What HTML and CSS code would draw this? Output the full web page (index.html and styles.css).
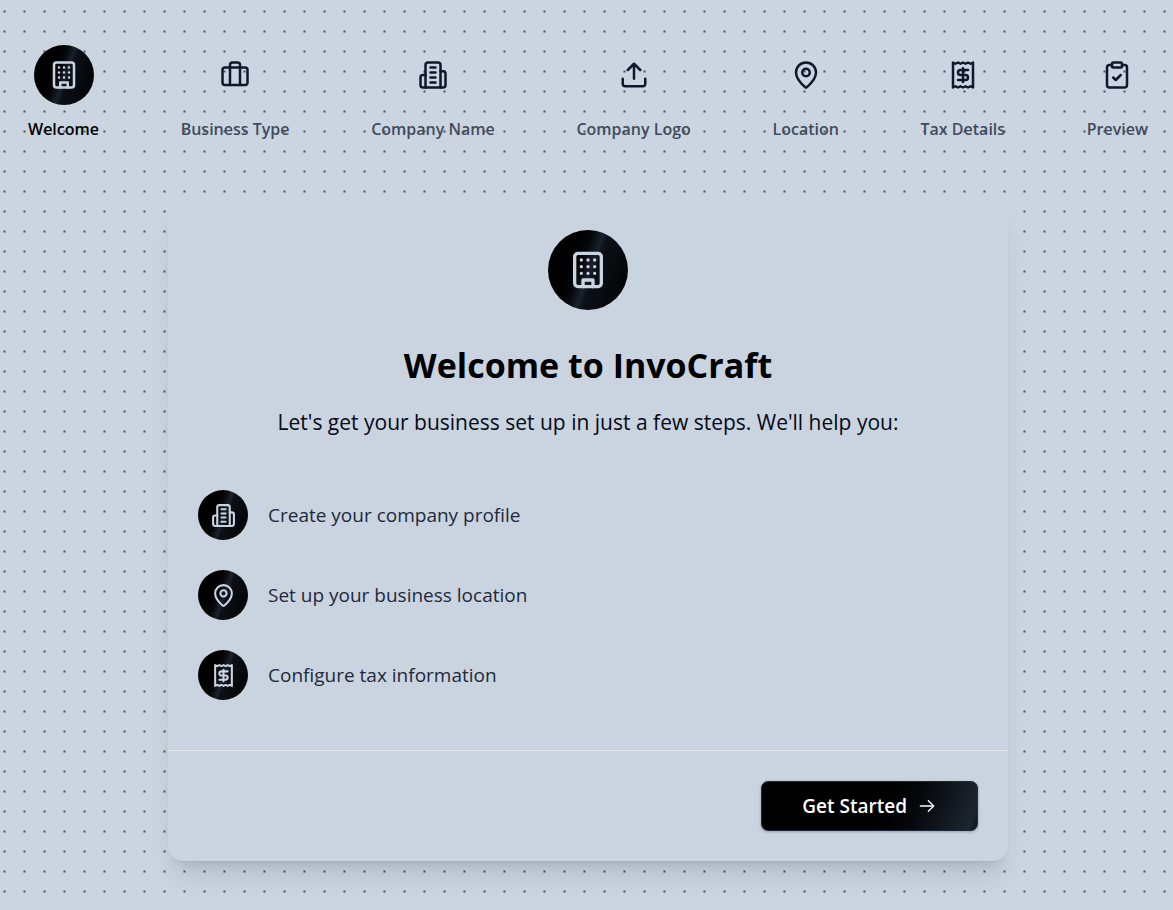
FILE: index.html
```html
<!DOCTYPE html>
<html lang="en">
<head>
<meta charset="utf-8">
<meta name="viewport" content="width=device-width, initial-scale=1">
<title>InvoCraft</title>
<link rel="stylesheet" href="styles.css">
</head>
<body>
<svg class="sprite" aria-hidden="true">
  <symbol id="building" viewBox="0 0 24 24"><rect width="16" height="20" x="4" y="2" rx="2"/><path d="M9 22v-4h6v4M8 6h.01M16 6h.01M12 6h.01M12 10h.01M12 14h.01M16 10h.01M16 14h.01M8 10h.01M8 14h.01"/></symbol>
  <symbol id="briefcase" viewBox="0 0 24 24"><path d="M16 20V4a2 2 0 0 0-2-2h-4a2 2 0 0 0-2 2v16"/><rect width="20" height="14" x="2" y="6" rx="2"/></symbol>
  <symbol id="offices" viewBox="0 0 24 24"><path d="M6 22V4a2 2 0 0 1 2-2h8a2 2 0 0 1 2 2v18Z"/><path d="M6 12H4a2 2 0 0 0-2 2v6a2 2 0 0 0 2 2h2M18 9h2a2 2 0 0 1 2 2v9a2 2 0 0 1-2 2h-2M10 6h4M10 10h4M10 14h4M10 18h4"/></symbol>
  <symbol id="upload" viewBox="0 0 24 24"><path d="M21 15v4a2 2 0 0 1-2 2H5a2 2 0 0 1-2-2v-4M17 8l-5-5-5 5M12 3v12"/></symbol>
  <symbol id="pin" viewBox="0 0 24 24"><path d="M20 10c0 4.993-5.539 10.193-7.399 11.799a1 1 0 0 1-1.202 0C9.539 20.193 4 14.993 4 10a8 8 0 0 1 16 0"/><circle cx="12" cy="10" r="3"/></symbol>
  <symbol id="receipt" viewBox="0 0 24 24"><path d="M4 2v20l2-1 2 1 2-1 2 1 2-1 2 1 2-1 2 1V2l-2 1-2-1-2 1-2-1-2 1-2-1-2 1Z"/><path d="M16 8h-6a2 2 0 1 0 0 4h4a2 2 0 1 1 0 4H8M12 17.5v-11"/></symbol>
  <symbol id="clipboard" viewBox="0 0 24 24"><rect width="8" height="4" x="8" y="2" rx="1"/><path d="M16 4h2a2 2 0 0 1 2 2v14a2 2 0 0 1-2 2H6a2 2 0 0 1-2-2V6a2 2 0 0 1 2-2h2M9 14l2 2 4-4"/></symbol>
</svg>
<div class="page">
  <nav aria-label="Setup steps">
    <ol class="steps">
      <li class="step active" aria-current="step"><span class="badge step-badge"><svg class="icon"><use href="#building"/></svg></span><span>Welcome</span></li>
      <li class="step"><span class="step-badge"><svg class="icon"><use href="#briefcase"/></svg></span><span>Business Type</span></li>
      <li class="step"><span class="step-badge"><svg class="icon"><use href="#offices"/></svg></span><span>Company Name</span></li>
      <li class="step"><span class="step-badge"><svg class="icon"><use href="#upload"/></svg></span><span>Company Logo</span></li>
      <li class="step"><span class="step-badge"><svg class="icon"><use href="#pin"/></svg></span><span>Location</span></li>
      <li class="step"><span class="step-badge"><svg class="icon"><use href="#receipt"/></svg></span><span>Tax Details</span></li>
      <li class="step"><span class="step-badge"><svg class="icon"><use href="#clipboard"/></svg></span><span>Preview</span></li>
    </ol>
  </nav>
  <main class="card">
    <div class="card-body">
      <span class="badge hero-badge"><svg class="icon icon-lg"><use href="#building"/></svg></span>
      <h1 class="title">Welcome to InvoCraft</h1>
      <p class="lead">Let's get your business set up in just a few steps. We'll help you:</p>
      <ul class="features">
        <li class="feature"><span class="badge feature-badge"><svg class="icon icon-sm"><use href="#offices"/></svg></span><span>Create your company profile</span></li>
        <li class="feature"><span class="badge feature-badge"><svg class="icon icon-sm"><use href="#pin"/></svg></span><span>Set up your business location</span></li>
        <li class="feature"><span class="badge feature-badge"><svg class="icon icon-sm"><use href="#receipt"/></svg></span><span>Configure tax information</span></li>
      </ul>
    </div>
    <footer class="card-footer">
      <button class="start" type="button"><span>Get Started</span><svg class="arrow" viewBox="0 0 15 15" aria-hidden="true"><path d="M8.14645 3.14645C8.34171 2.95118 8.65829 2.95118 8.85355 3.14645L12.8536 7.14645C13.0488 7.34171 13.0488 7.65829 12.8536 7.85355L8.85355 11.8536C8.65829 12.0488 8.34171 12.0488 8.14645 11.8536C7.95118 11.6583 7.95118 11.3417 8.14645 11.1464L11.2929 8H2.5C2.22386 8 2 7.77614 2 7.5C2 7.22386 2.22386 7 2.5 7H11.2929L8.14645 3.85355C7.95118 3.65829 7.95118 3.34171 8.14645 3.14645Z"/></svg></button>
    </footer>
  </main>
</div>
</body>
</html>
```
FILE: styles.css
```css
* { box-sizing: border-box; }

body {
  margin: 0;
  min-height: 100vh;
  font-family: "Open Sans", "Noto Sans", sans-serif;
  color: #020617;
  background-color: #cbd5e1;
  background-image: radial-gradient(circle at 22.5% 57.5%, #4b5563 0, #4b556300 2px);
  background-size: 20px 20px;
}

.sprite { display: none; }

.page { padding: 45px 25px 49px 28px; }

.steps,
.features {
  list-style: none;
  margin: 0;
  padding: 0;
}

.steps {
  display: flex;
  justify-content: space-between;
}

.step {
  display: flex;
  flex-direction: column;
  align-items: center;
  gap: 12px;
  font-size: 16px;
  line-height: 24px;
  font-weight: 600;
  color: #414b5c;
  white-space: nowrap;
}

.step.active { color: #000; }

.step-badge {
  display: grid;
  place-items: center;
  width: 60px;
  height: 60px;
  color: #0f172a;
}

.badge {
  display: grid;
  place-items: center;
  flex: none;
  border-radius: 50%;
  color: #cbd5e1;
  background: linear-gradient(110deg, #000 0%, #000 30%, #05070a 42%, #1a222d 52%, #0c1017 57%, #000 100%);
}

.icon {
  width: 30px;
  height: 30px;
  fill: none;
  stroke: currentColor;
  stroke-width: 2;
  stroke-linecap: round;
  stroke-linejoin: round;
}

.icon-lg { width: 40px; height: 40px; }
.icon-sm { width: 25px; height: 25px; }

.card {
  max-width: 840px;
  margin: 59px auto 0;
  border-radius: 15px;
  background: #cad4e0;
  box-shadow:
    0 20px 25px -5px rgba(0, 0, 0, 0.1),
    0 8px 10px -6px rgba(0, 0, 0, 0.1);
}

.card-body {
  display: flex;
  flex-direction: column;
  align-items: center;
  padding: 30px 30px 50px;
}

.hero-badge { width: 80px; height: 80px; }

.title {
  margin: 30px 0 0;
  font-size: 34px;
  line-height: 50px;
  font-weight: 700;
  color: #000;
  text-align: center;
}

.lead {
  margin: 15px 0 0;
  font-size: 21px;
  line-height: 35px;
  color: #050a14;
  text-align: center;
}

.features {
  display: grid;
  gap: 30px;
  align-self: stretch;
  margin-top: 50px;
}

.feature {
  display: flex;
  align-items: center;
  gap: 20px;
  font-size: 19px;
  color: #1e293b;
}

.feature-badge { width: 50px; height: 50px; }

.card-footer {
  display: flex;
  justify-content: flex-end;
  padding: 30px;
  border-top: 1px solid #e5e7eb;
}

.start {
  display: flex;
  align-items: center;
  justify-content: center;
  gap: 10px;
  height: 50px;
  padding: 0 40px;
  border: 1px solid #1e293b;
  border-radius: 7px;
  font: 600 19px "Open Sans", "Noto Sans", sans-serif;
  color: #fff;
  background: linear-gradient(110deg, #000 0%, #000 55%, #05070b 70%, #1c2530 96%, #10151e 100%);
  box-shadow: 0 1px 3px rgba(15, 23, 42, 0.3);
  cursor: pointer;
}

.arrow {
  width: 20px;
  height: 20px;
  fill: currentColor;
}
```
